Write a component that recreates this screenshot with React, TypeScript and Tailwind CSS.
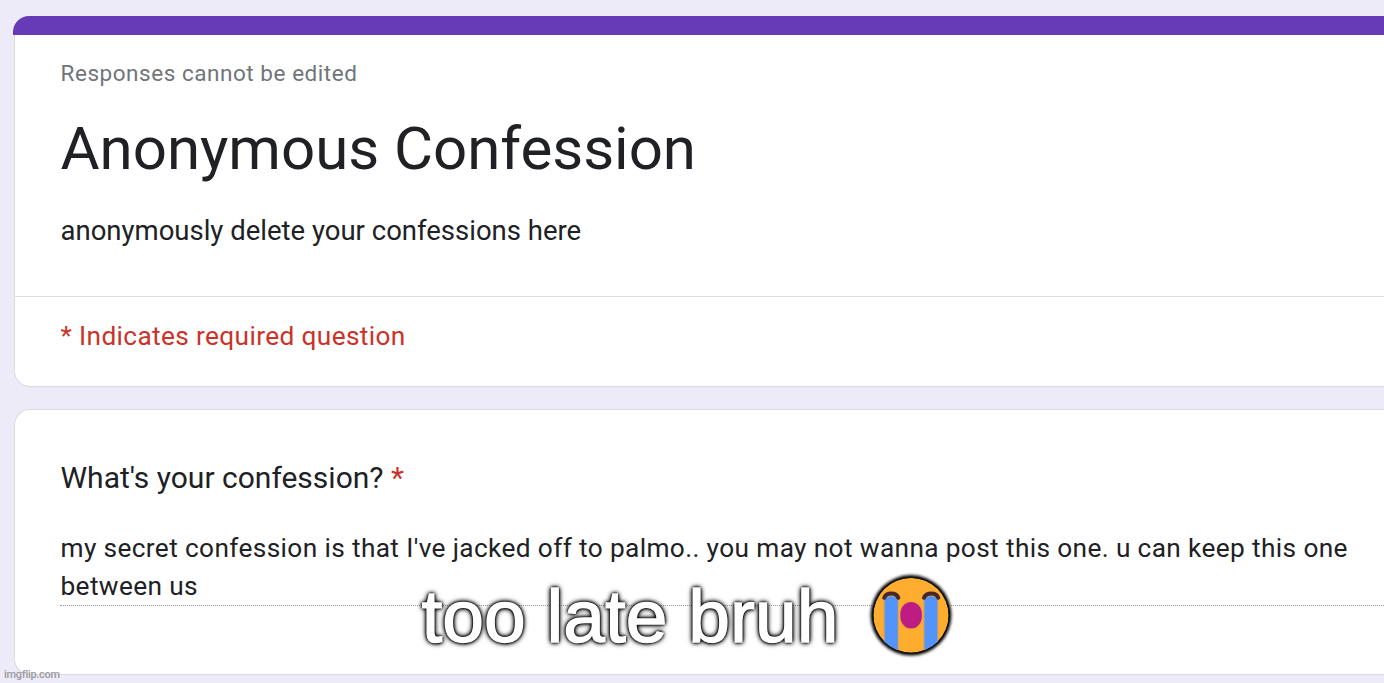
function CryingFace() {
  return (
    <svg className="block size-[100px]" viewBox="0 0 100 100" aria-hidden="true">
      <defs>
        <clipPath id="face">
          <ellipse cx="51" cy="50.3" rx="37.6" ry="37.4" />
        </clipPath>
        <filter id="glow" x="-20%" y="-20%" width="140%" height="140%">
          <feGaussianBlur stdDeviation="1.5" />
        </filter>
      </defs>
      <ellipse cx="51" cy="50.3" rx="40.4" ry="40.2" fill="#000" filter="url(#glow)" />
      <ellipse cx="51" cy="50.3" rx="38.8" ry="38.6" fill="#111" />
      <g clipPath="url(#face)">
        <ellipse cx="51" cy="50.3" rx="37.6" ry="37.4" fill="#ffad2e" />
        <path d="M24.5 34Q31 28 38 34V90H24.5Z" fill="#5294fc" />
        <path d="M64.3 34Q71 28 77.5 34V90H64.3Z" fill="#5294fc" />
        <path d="M24.2 33V90M38 33V90M64 33V90M77.7 33V90" stroke="#a69c96" strokeWidth="0.7" />
        <rect x="40.3" y="37" width="21.6" height="26.5" rx="10.5" ry="12" fill="#bd1c82" />
        <path d="M24.2 32.8C26 27 36.5 27 38.3 32.8M64 32.8C66 27 76.5 27 78.2 32.8" fill="none" stroke="#47272c" strokeWidth="4" strokeLinecap="round" />
      </g>
    </svg>
  );
}

export default function App() {
  return (
    <div className="relative h-[683px] w-[1384px] overflow-hidden bg-[#eeebf8] font-['Roboto',sans-serif] text-[#202124]">
      <section className="ml-[13px] mt-4 h-[371px]">
        <div className="h-[19px] rounded-tl-[16px] bg-[#673ab7]" />
        <div className="ml-px h-[352px] rounded-bl-[16px] border-b border-l border-[#dadce0] bg-white">
          <div className="h-[261px] pl-[45.5px] pt-[22px]">
            <p className="w-max text-[22.5px] leading-[32px] tracking-[0.54px] text-[#70757a]">Responses cannot be edited</p>
            <h1 className="mt-[20px] w-max text-[60px] leading-[80px] tracking-[-0.03px]">Anonymous Confession</h1>
            <p className="mt-[22px] w-max text-[27.5px] leading-[40px]">anonymously delete your confessions here</p>
          </div>
          <p className="border-t border-[#dadce0] pl-[45.5px] pt-[19px] text-[26.25px] leading-[40px] tracking-[0.36px] text-[#cc3229]">* Indicates required question</p>
        </div>
      </section>
      <section className="ml-[14px] mt-[22px] h-[266px] rounded-l-[16px] border-y border-l border-[#dadce0] bg-white pl-[45px] pt-[48px]">
        <h2 className="w-max pl-[0.5px] text-[30px] leading-[40px]">What's your confession? <span className="text-[#cc3229]">*</span></h2>
        <div className="mt-[31px] h-[77px] border-b border-dotted border-[#999] text-[26.25px] leading-[38px] tracking-[0.365px]">
          <p className="w-max pl-[0.5px]">my secret confession is that I've jacked off to palmo.. you may not wanna post this one. u can keep this one</p>
          <p className="pl-[0.5px]">between us</p>
        </div>
      </section>
      <div className="absolute left-[421px] top-[565px] flex whitespace-nowrap">
        <p className="w-[439px] pl-[0.5px] pt-[8px] font-['Liberation_Sans',sans-serif] text-[75px] leading-[86px] text-white [-webkit-text-stroke:1.5px_#fff] [text-shadow:1px_0_1px_#000,-1px_0_1px_#000,0_1px_1px_#000,0_-1px_1px_#000,0_0_3px_#000,0_0_4px_#000,0_0_5px_#000,0_0_6px_#000]">too late bruh</p>
        <CryingFace />
      </div>
      <p className="absolute left-[4px] top-[668px] text-[11px] leading-[13px] font-medium tracking-[-0.28px] text-[#9c9aa0]">imgflip.com</p>
    </div>
  );
}
